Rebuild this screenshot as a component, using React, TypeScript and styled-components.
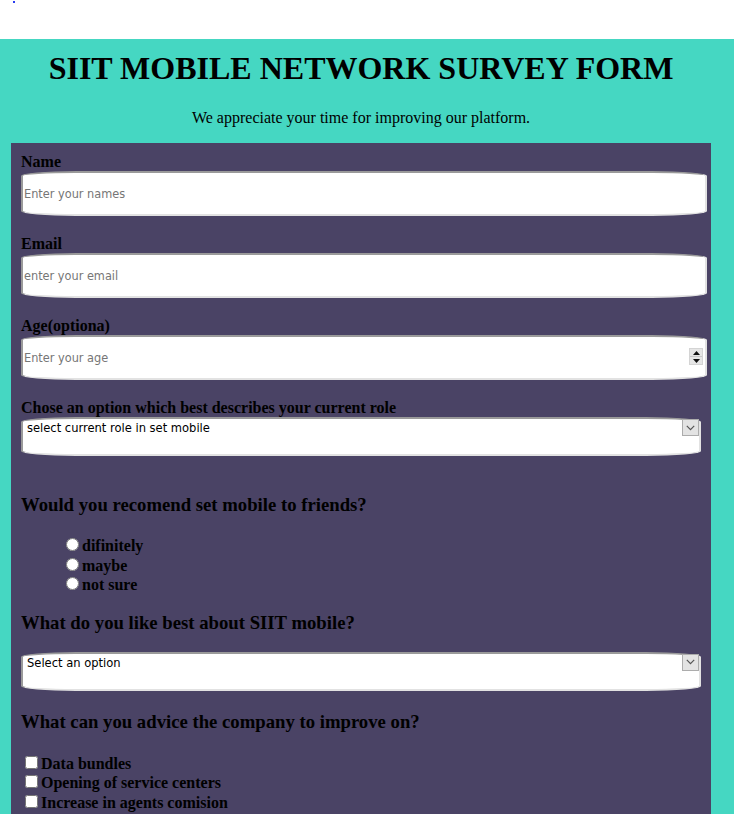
import React from "react";
import styled, { createGlobalStyle } from "styled-components";

const GlobalStyle = createGlobalStyle`
  html, body { margin: 0; padding: 0; background: #ffffff; }
  body { font-family: "Liberation Serif", "Times New Roman", serif; color: #000000; }
  * { box-sizing: border-box; }
`;

const TopBar = styled.div`
  height: 39px;
  padding: 1px 0 0 13px;
`;

const Dot = styled.a`
  display: block;
  width: 2px;
  height: 2px;
  background: #2a3cf0;
`;

const Main = styled.main`
  background: #45d7c2;
  padding: 11px 23px 0 11px;
  min-height: 775px;
`;

const Title = styled.h1`
  margin: 0;
  text-align: center;
  font-size: 32px;
  line-height: 37px;
  font-weight: bold;
`;

const Subtitle = styled.p`
  margin: 22px 0 16px;
  text-align: center;
  font-size: 16px;
  line-height: 18px;
`;

const Panel = styled.form`
  display: flex;
  flex-direction: column;
  background: #4a4365;
  padding: 9px 10px 40px;
`;

const Label = styled.label`
  display: block;
  font-weight: bold;
  font-size: 16px;
  line-height: 19px;
`;

const FieldBox = styled.div<{ $after: number; $before?: number }>`
  position: relative;
  margin-top: ${(p) => p.$before ?? 0}px;
  margin-bottom: ${(p) => p.$after}px;
`;

const controlFont = `"DejaVu Sans Condensed", "DejaVu Sans", Verdana, sans-serif`;

const TextInput = styled.input`
  display: block;
  width: calc(100% + 6px);
  height: 45px;
  margin: 0;
  padding: 0 1px;
  border: 2px solid;
  border-color: #9a9a9a #e2e2e2 #e2e2e2 #9a9a9a;
  border-radius: 55px / 5px;
  background: #ffffff;
  font-family: ${controlFont};
  font-size: 12.6px;
  color: #000000;
  outline: none;
  -moz-appearance: textfield;
  &::placeholder { color: #767676; }
  &::-webkit-inner-spin-button,
  &::-webkit-outer-spin-button { -webkit-appearance: none; margin: 0; }
`;

const Spinner = styled.span`
  position: absolute;
  top: 13px;
  right: -2px;
  width: 14px;
  height: 17px;
  display: flex;
  flex-direction: column;
  background: #f0f0f0;
  border: 1px solid #d4d4d4;
  pointer-events: none;
`;

const SpinHalf = styled.span<{ $down?: boolean }>`
  flex: 1;
  display: flex;
  align-items: center;
  justify-content: center;
  background: #e6e6e6;
  border-top: ${(p) => (p.$down ? "1px solid #c8c8c8" : "none")};
`;

const SelectBox = styled.select`
  display: block;
  width: 100%;
  height: 39px;
  margin: 0;
  appearance: none;
  -webkit-appearance: none;
  border: 2px solid;
  border-color: #9a9a9a #e2e2e2 #e2e2e2 #9a9a9a;
  border-radius: 55px / 5px;
  background: #ffffff;
  padding: 2px 22px 19px 4px;
  font-family: ${controlFont};
  font-size: 12.8px;
  line-height: 14px;
  color: #000000;
  outline: none;
`;

const ArrowBox = styled.span`
  position: absolute;
  top: 2px;
  right: 2px;
  width: 17px;
  height: 17px;
  display: flex;
  align-items: center;
  justify-content: center;
  background: #e3e3e3;
  border: 1px solid #acacac;
  pointer-events: none;
`;

const Question = styled.h3<{ $top: number }>`
  margin: ${(p) => p.$top}px 0 0;
  font-size: 18.72px;
  line-height: 21px;
  font-weight: bold;
`;

const RadioList = styled.div`
  display: flex;
  flex-direction: column;
  margin-top: 20px;
  padding-left: 40px;
`;

const RadioRow = styled.label`
  display: block;
  height: 19.5px;
  line-height: 19.5px;
  font-size: 16px;
  font-weight: bold;
`;

const Radio = styled.input`
  margin: 3px 3px 0 5px;
`;

const CheckList = styled.div`
  display: flex;
  flex-direction: column;
  margin-top: 21px;
`;

const CheckRow = styled.label`
  display: block;
  height: 19.7px;
  line-height: 19.5px;
  font-size: 16px;
  font-weight: bold;
`;

const Check = styled.input`
  margin: 3px 3px 3px 4px;
`;

const SubmitButton = styled.button`
  align-self: flex-start;
  margin-top: 20px;
  font-family: ${controlFont};
  font-size: 13px;
`;

const Chevron = () => (
  <svg width="9" height="6" viewBox="0 0 9 6">
    <polyline points="0.8,0.8 4.5,4.6 8.2,0.8" fill="none" stroke="#555" strokeWidth="1.2" />
  </svg>
);

const Tri = ({ down }: { down?: boolean }) => (
  <svg width="7" height="4" viewBox="0 0 7 4">
    <polygon points={down ? "0,0 7,0 3.5,4" : "0,4 7,4 3.5,0"} fill="#111" />
  </svg>
);

export default function App() {
  return (
    <>
      <GlobalStyle />
      <TopBar>
        <Dot href="#" aria-label="home" />
      </TopBar>
      <Main>
        <Title>SIIT MOBILE NETWORK SURVEY FORM</Title>
        <Subtitle>We appreciate your time for improving our platform.</Subtitle>
        <Panel onSubmit={(e) => e.preventDefault()}>
          <Label htmlFor="name">Name</Label>
          <FieldBox $after={18}>
            <TextInput id="name" type="text" placeholder="Enter your names" />
          </FieldBox>

          <Label htmlFor="email">Email</Label>
          <FieldBox $after={18}>
            <TextInput id="email" type="email" placeholder="enter your email" />
          </FieldBox>

          <Label htmlFor="age">Age(optiona)</Label>
          <FieldBox $after={18}>
            <TextInput id="age" type="number" placeholder="Enter your age" />
            <Spinner>
              <SpinHalf><Tri /></SpinHalf>
              <SpinHalf $down><Tri down /></SpinHalf>
            </Spinner>
          </FieldBox>

          <Label htmlFor="role">Chose an option which best describes your current role</Label>
          <FieldBox $after={0}>
            <SelectBox id="role" defaultValue="">
              <option value="">select current role in set mobile</option>
              <option value="student">Student</option>
              <option value="agent">Agent</option>
              <option value="other">Other</option>
            </SelectBox>
            <ArrowBox><Chevron /></ArrowBox>
          </FieldBox>

          <Question $top={38}>Would you recomend set mobile to friends?</Question>
          <RadioList>
            <RadioRow><Radio type="radio" name="recommend" value="definitely" />difinitely</RadioRow>
            <RadioRow><Radio type="radio" name="recommend" value="maybe" />maybe</RadioRow>
            <RadioRow><Radio type="radio" name="recommend" value="notsure" />not sure</RadioRow>
          </RadioList>

          <Question $top={18}>What do you like best about SIIT mobile?</Question>
          <FieldBox $after={0} $before={19}>
            <SelectBox defaultValue="">
              <option value="">Select an option</option>
              <option value="data">Data bundles</option>
              <option value="coverage">Network coverage</option>
            </SelectBox>
            <ArrowBox><Chevron /></ArrowBox>
          </FieldBox>

          <Question $top={20}>What can you advice the company to improve on?</Question>
          <CheckList>
            <CheckRow><Check type="checkbox" />Data bundles</CheckRow>
            <CheckRow><Check type="checkbox" />Opening of service centers</CheckRow>
            <CheckRow><Check type="checkbox" />Increase in agents comision</CheckRow>
            <CheckRow><Check type="checkbox" />Customer care services</CheckRow>
          </CheckList>
          <SubmitButton type="submit">Submit</SubmitButton>
        </Panel>
      </Main>
    </>
  );
}
